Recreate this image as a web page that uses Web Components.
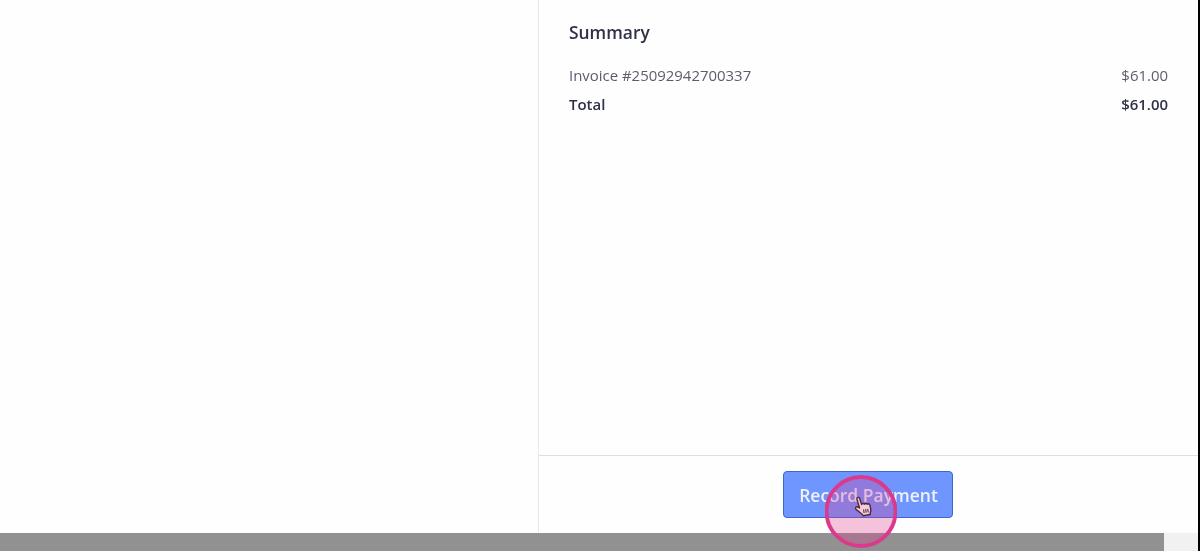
<!DOCTYPE html>
<html><head><meta charset="utf-8">
<style>html,body{margin:0;padding:0;height:100%;overflow:hidden;background:#000}</style>
</head><body>
<app-shell>
  <summary-pane slot="right">
    <summary-row>
      <span slot="label">Invoice #25092942700337</span><span slot="value">$61.00</span>
    </summary-row>
    <summary-row total>
      <span slot="label">Total</span><span slot="value">$61.00</span>
    </summary-row>
  </summary-pane>
</app-shell>
<click-cursor></click-cursor>
<script>
function def(name, html){
  customElements.define(name, class extends HTMLElement{
    connectedCallback(){ if(!this.shadowRoot){ this.attachShadow({mode:'open'}).innerHTML = html; } }
  });
}
def('app-shell', `<style>
:host{display:flex;flex-direction:column;width:1198px;height:551px;background:#fff;font-family:"Open Sans","Noto Sans",sans-serif}
.main{flex:1;display:flex;min-height:0;background:#fefefe}
.left{width:538px;flex:none;box-sizing:border-box}
.right{flex:1;min-width:0;display:flex;flex-direction:column;border-left:1px solid #e9e9ec}
.body{flex:1;min-height:0}
.foot{height:78px;box-sizing:border-box;border-top:1px solid #dedee0;display:flex;justify-content:center;padding:15px 0 0 0}
.bar{height:18px;flex:none;display:flex;background:#f1f1f1}
.thumb{width:1164px;background:#919191}
</style>
<div class="main"><div class="left"></div><div class="right"><div class="body"><slot name="right"></slot></div><div class="foot"><record-button>Record Payment</record-button></div></div></div>
<div class="bar"><div class="thumb"></div></div>`);
def('summary-pane', `<style>
:host{display:block;padding:20px 30px 0 30px}
h2{margin:0 0 21px;font:600 17.4px/24px "Open Sans","Noto Sans",sans-serif;color:#2f3246;filter:blur(.3px)}
</style><h2>Summary</h2><slot></slot>`);
def('summary-row', `<style>
:host{display:flex;justify-content:space-between;font-size:14.95px;line-height:20px;color:#5b5d6e;margin-bottom:9px;filter:blur(.3px)}
:host([total]){font-weight:600;color:#2f3246}
</style><slot name="label"></slot><slot name="value"></slot>`);
def('record-button', `<style>
:host{display:flex;align-items:center;justify-content:center;box-sizing:border-box;width:170px;height:47px;margin-left:-2px;padding-left:2px;border:1px solid #3f66cf;border-radius:4px;background:#6f95ff;color:#eef2ff;font-weight:600;font-size:17.5px}
span{filter:blur(.3px)}
</style><span><slot></slot></span>`);
def('click-cursor', `<style>
:host{position:fixed;left:825px;top:475px;width:72px;height:73px;display:block}
svg{display:block}
</style>
<svg width="72" height="73" viewBox="0 0 72 73">
<circle cx="36" cy="36.5" r="34.5" fill="rgba(222,60,140,.3)" stroke="#db3a8c" stroke-width="3.8"/>
<g transform="translate(29.5,21) rotate(-10 8 10) scale(1.05)">
<path d="M3.5 1.8c0-1.4 2.6-1.4 2.7 0l.8 6.2c.3-1 2.3-1 2.6.2.5-.8 2.3-.7 2.6.5.6-.6 2.2-.4 2.4.9l.3 3.6c.1 1.6-.4 2.8-1.1 4-.3.6-.4 1-.4 1.6H6.6c-.3-1.3-.9-2-1.9-3L1.2 11.9c-.8-1-.6-2.4.4-2.6.8-.2 1.6.3 2.9 1.6z" fill="#f3cdd9" stroke="#4a2a3c" stroke-width="1.3" stroke-linejoin="round"/>
<path d="M8 13v3.4M10 13v3.4M12 13v3.4" stroke="#4a2a3c" stroke-width="1" fill="none"/>
</g></svg>`);
</script>
</body></html>
